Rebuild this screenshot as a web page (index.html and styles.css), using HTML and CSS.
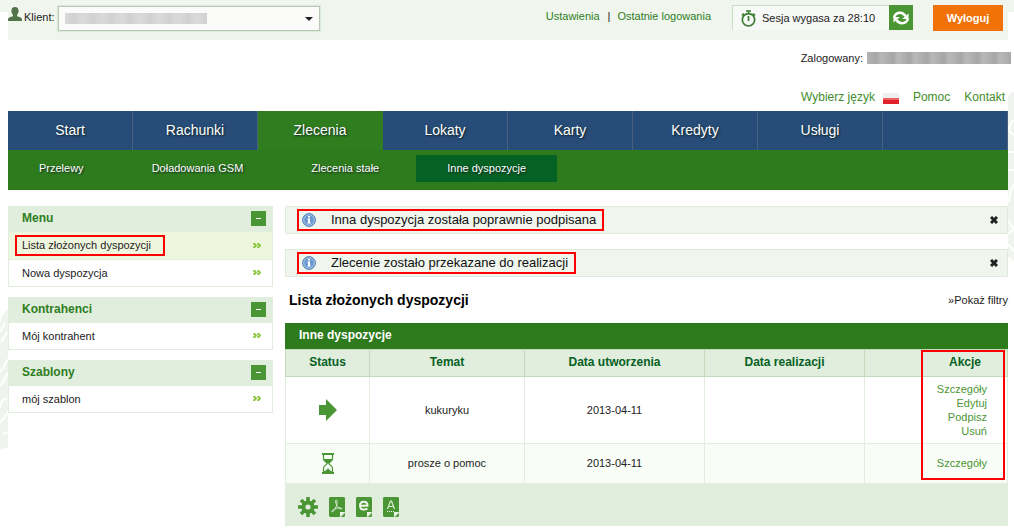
FILE: index.html
```html
<!DOCTYPE html>
<html lang="pl">
<head>
<meta charset="utf-8">
<title>Lista złożonych dyspozycji</title>
<link rel="stylesheet" href="styles.css">
</head>
<body>
<svg class="leaf leaf-left" viewBox="0 0 8 140" aria-hidden="true">
  <path d="M8 0C2 4 0 10 0 18v122l8-3z" fill="#f0f4ee"/>
  <path d="M0 22l5-9M1 32l6-10M0 62c4-4 5-9 8-13M0 75c4-2 5-8 8-12M0 98c1-8 4-10 7-9M0 112c4-2 5-7 8-10M3 124l5-2" stroke="#fff" stroke-width="2" fill="none"/>
</svg>
<svg class="leaf leaf-right" viewBox="0 0 6 176" aria-hidden="true">
  <path d="M6 0H4Q0 3 0 8v157l6 4z" fill="#f0f4ee"/>
  <path d="M6 28q-6 4-4 12l4 3M0 60h6M0 78h6M6 92q-5 8-5 18M0 128l6 10M0 142l6-5M0 152l6 7" stroke="#fff" stroke-width="2" fill="none"/>
</svg>
<div class="page">
  <header>
    <div class="topbar">
      <form class="client">
        <svg class="user" viewBox="0 0 14 14" aria-hidden="true"><path d="M7 0c2.400 0 3.600 1.500 3.600 3.800 0 1.900-.8 3.200-1.500 4v1.400c1.800.8 4.900 1.100 4.900 3.300V14H0v-1.500c0-2.200 3.100-2.500 4.900-3.300V7.800c-.7-.8-1.500-2.100-1.500-4C3.400 1.500 4.600 0 7 0z" fill="#51744a"/></svg>
        <label for="client">Klient:</label>
        <span class="select-wrap">
          <select id="client"><option></option></select>
          <span class="redacted redacted-light"></span>
          <svg class="caret" viewBox="0 0 8 4" aria-hidden="true"><path d="M0 0h8L4 4z" fill="#222"/></svg>
        </span>
      </form>
      <div class="tools">
        <a href="#">Ustawienia</a><span class="bar">|</span><a href="#">Ostatnie logowania</a>
        <div class="session">
          <svg class="watch" viewBox="0 0 15 17" aria-hidden="true"><g fill="none" stroke="#3c7c30" stroke-width="1.700"><circle cx="7.500" cy="9.800" r="6.200"/><path d="M5 1h5M7.500 1v3M7.500 6v5M12 3.500l2 2M3 3.500l-2 2"/></g></svg>
          <span>Sesja wygasa za 28:10</span>
        </div>
        <button class="refresh" type="button" aria-label="Odśwież sesję">
          <svg viewBox="0 0 18 16" aria-hidden="true"><g fill="none" stroke="#fff" stroke-width="2.600"><path d="M2 7.500C3 4 5.500 2.800 8 2.800c2.300 0 4 .9 5.500 3.200"/><path d="M16 8.500c-1 3.500-3.500 4.700-6 4.700-2.300 0-4-.9-5.500-3.200"/></g><path d="M16.500 3.500V9H10zM1.500 12.500V7H8z" fill="#fff"/></svg>
        </button>
        <button class="logout" type="button">Wyloguj</button>
      </div>
    </div>
    <div class="logged"><span>Zalogowany:</span><span class="redacted redacted-dark"></span></div>
    <div class="help">
      <a class="lang" href="#">Wybierz język <svg viewBox="0 0 16 11" aria-hidden="true"><path d="M0 0h16v6H0z" fill="#efefef"/><path d="M0 5h16v6H0z" fill="#e0202a"/><path d="M0 5h16v2H0z" fill="#f06060"/></svg></a>
      <a href="#">Pomoc</a>
      <a href="#">Kontakt</a>
    </div>
  </header>
  <nav>
    <ul class="mainnav">
      <li><a href="#">Start</a></li>
      <li><a href="#">Rachunki</a></li>
      <li class="active"><a href="#">Zlecenia</a></li>
      <li><a href="#">Lokaty</a></li>
      <li><a href="#">Karty</a></li>
      <li><a href="#">Kredyty</a></li>
      <li><a href="#">Usługi</a></li>
      <li></li>
    </ul>
    <ul class="subnav">
      <li><a href="#">Przelewy</a></li>
      <li><a href="#">Doładowania GSM</a></li>
      <li><a href="#">Zlecenia stałe</a></li>
      <li class="active"><a href="#">Inne dyspozycje</a></li>
    </ul>
  </nav>
  <div class="columns">
    <aside>
      <section class="panel">
        <h2>Menu <button type="button" aria-label="Zwiń Menu"></button></h2>
        <a class="current" href="#"><span class="marked">Lista złożonych dyspozycji</span><svg class="chev" viewBox="0 0 8 5" aria-hidden="true"><path d="M.5 0L3 2.500.5 5M4.500 0L7 2.500 4.500 5"/></svg></a>
        <a href="#">Nowa dyspozycja<svg class="chev" viewBox="0 0 8 5" aria-hidden="true"><path d="M.5 0L3 2.500.5 5M4.500 0L7 2.500 4.500 5"/></svg></a>
      </section>
      <section class="panel">
        <h2>Kontrahenci <button type="button" aria-label="Zwiń Kontrahenci"></button></h2>
        <a href="#">Mój kontrahent<svg class="chev" viewBox="0 0 8 5" aria-hidden="true"><path d="M.5 0L3 2.500.5 5M4.500 0L7 2.500 4.500 5"/></svg></a>
      </section>
      <section class="panel">
        <h2>Szablony <button type="button" aria-label="Zwiń Szablony"></button></h2>
        <a href="#">mój szablon<svg class="chev" viewBox="0 0 8 5" aria-hidden="true"><path d="M.5 0L3 2.500.5 5M4.500 0L7 2.500 4.500 5"/></svg></a>
      </section>
    </aside>
    <main>
      <div class="message">
        <div class="marked">
          <svg class="info" viewBox="0 0 14 14" aria-hidden="true"><circle cx="7" cy="7" r="6.400" fill="#6c9ad0" stroke="#547fae"/><circle cx="7" cy="7" r="5.300" fill="none" stroke="#b8d0ec" stroke-width=".8"/><path d="M6 3h2v1.600H6zM5.500 5.500H8v4h.8v1H5.300v-1H6v-3h-.5z" fill="#fff"/></svg>
          <span>Inna dyspozycja została poprawnie podpisana</span>
        </div>
        <button class="close" type="button" aria-label="Zamknij"><svg viewBox="0 0 8 8" aria-hidden="true"><path d="M1 1l6 6M7 1L1 7"/></svg></button>
      </div>
      <div class="message">
        <div class="marked">
          <svg class="info" viewBox="0 0 14 14" aria-hidden="true"><circle cx="7" cy="7" r="6.400" fill="#6c9ad0" stroke="#547fae"/><circle cx="7" cy="7" r="5.300" fill="none" stroke="#b8d0ec" stroke-width=".8"/><path d="M6 3h2v1.600H6zM5.500 5.500H8v4h.8v1H5.300v-1H6v-3h-.5z" fill="#fff"/></svg>
          <span>Zlecenie zostało przekazane do realizacji</span>
        </div>
        <button class="close" type="button" aria-label="Zamknij"><svg viewBox="0 0 8 8" aria-hidden="true"><path d="M1 1l6 6M7 1L1 7"/></svg></button>
      </div>
      <div class="heading">
        <h1>Lista złożonych dyspozycji</h1>
        <a href="#">»Pokaż filtry</a>
      </div>
      <h3>Inne dyspozycje</h3>
      <div class="table-wrap">
        <table>
          <colgroup><col class="c-status"><col class="c-topic"><col class="c-created"><col class="c-done"><col></colgroup>
          <thead>
            <tr><th>Status</th><th>Temat</th><th>Data utworzenia</th><th>Data realizacji</th><th class="actions">Akcje</th></tr>
          </thead>
          <tbody>
            <tr>
              <td><svg class="arrow" viewBox="0 0 18 22" role="img" aria-label="Przekazana"><path d="M0 6h7V0l11 11L7 22v-6H0z" fill="#4b9634"/></svg></td>
              <td>kukuryku</td><td>2013-04-11</td><td></td>
              <td class="actions"><a href="#">Szczegóły</a><a href="#">Edytuj</a><a href="#">Podpisz</a><a href="#">Usuń</a></td>
            </tr>
            <tr>
              <td><svg class="glass" viewBox="0 0 12 21" role="img" aria-label="Oczekująca"><path d="M0 0h12v2H0zM0 19h12v2H0z" fill="#4b9634"/><path d="M1.500 2v4C1.500 8.500 5 9 5 10.500S1.500 12.500 1.500 15v4M10.500 2v4c0 2.500-3.500 3-3.500 4.500s3.500 2 3.500 4.500v4" fill="none" stroke="#4b9634" stroke-width="1.200"/><path d="M2 6h8c0 2-3 2.500-3 4.500H5C5 8.500 2 8 2 6zM2 19c0-1.500 3-1.500 4-4 1 2.500 4 2.500 4 4z" fill="#4b9634"/></svg></td>
              <td>prosze o pomoc</td><td>2013-04-11</td><td></td>
              <td class="actions"><a href="#">Szczegóły</a></td>
            </tr>
          </tbody>
        </table>
        <span class="mark-actions"></span>
      </div>
      <div class="exports">
        <button type="button" class="gear" aria-label="Ustawienia tabeli"><svg viewBox="0 0 20 20" aria-hidden="true"><g stroke="#4b9634" stroke-width="3.600"><path d="M10 0v20M0 10h20M3 3l14 14M17 3L3 17"/></g><circle cx="10" cy="10" r="6.600" fill="#4b9634"/><circle cx="10" cy="10" r="2.600" fill="#e1eddd"/></svg></button>
        <button type="button" aria-label="Eksport PDF"><svg viewBox="0 0 16 20" aria-hidden="true"><path d="M1 0h14l1 1v14l-5 5H1l-1-1V1z" fill="#4b9634"/><path d="M11 20v-5h5z" fill="#eef6eb"/><path d="M12 20l4-4v3l-1 1z" fill="#4b9634"/><path d="M7 3c2 0 1 3 .7 5C7 10.500 5 14.500 3 15c-1-1 2-3 5-3.800 2-.6 5-.6 5 .5-1 1-5-1-5.800-4.700C6.800 5.500 6 4 7 3z" fill="none" stroke="#d7ead1"/></svg></button>
        <button type="button" aria-label="Eksport Elixir"><svg viewBox="0 0 16 20" aria-hidden="true"><path d="M1 0h14l1 1v14l-5 5H1l-1-1V1z" fill="#4b9634"/><path d="M11 20v-5h5z" fill="#eef6eb"/><path d="M12 20l4-4v3l-1 1z" fill="#4b9634"/><path d="M4 8.700h7.500C11.500 6 10 4.800 7.800 4.800S4 6.300 4 8.700s1.500 3.900 4 3.900c1.400 0 2.500-.4 3.300-1.300" fill="none" stroke="#eef6eb" stroke-width="2"/></svg></button>
        <button type="button" aria-label="Eksport tekstu"><svg viewBox="0 0 16 20" aria-hidden="true"><path d="M1 0h14l1 1v14l-5 5H1l-1-1V1z" fill="#4b9634"/><path d="M11 20v-5h5z" fill="#eef6eb"/><path d="M12 20l4-4v3l-1 1z" fill="#4b9634"/><path d="M4.500 12L7.500 4h1l3 8M5.500 9.500h5" fill="none" stroke="#d7ead1" stroke-width="1.200"/><path d="M4 14.500h8" stroke="#fff" stroke-dasharray="1 1"/></svg></button>
      </div>
    </main>
  </div>
</div>
</body>
</html>
```
FILE: styles.css
```css
* { box-sizing: border-box; }
body {
  margin: 0;
  position: relative;
  background: linear-gradient(#f0f5ee, #f0f5ee) top / 100% 12px no-repeat #fff;
  font: 11px/14px "Liberation Sans", Arial, sans-serif;
  color: #222;
}
a { color: inherit; text-decoration: none; }
ul { list-style: none; margin: 0; padding: 0; }
svg { display: block; flex: none; }
button { border: 0; padding: 0; margin: 0; font: inherit; cursor: pointer; background: none; }
h1, h2, h3 { margin: 0; }

.leaf { position: absolute; }
.leaf-left { left: 0; top: 310px; width: 8px; height: 140px; }
.leaf-right { right: 0; top: 92px; width: 6px; height: 176px; }

.page { position: relative; padding: 0 6px 4px 8px; }

/* Header */
.topbar {
  display: flex;
  justify-content: space-between;
  align-items: flex-start;
  height: 40px;
  padding-right: 5px;
  background: #f0f5ee;
}
.client { display: flex; padding-top: 6px; }
.user { width: 14px; height: 14px; margin-top: 1px; }
.client label { padding: 4px 3px 0 2px; }
.select-wrap { position: relative; display: block; }
.select-wrap select {
  appearance: none;
  display: block;
  width: 262px;
  height: 25px;
  border: 1px solid #b9c6b5;
  box-shadow: 0 0 1px 1px #dcebd8;
  background: #fbfcfa;
}
.redacted { display: block; }
.redacted-light {
  position: absolute;
  left: 7px;
  top: 7px;
  width: 142px;
  height: 11px;
  pointer-events: none;
  background: repeating-linear-gradient(90deg, #dadada 0, #d0d0d0 9px, #d6d6d6 13px, #dadada 19px);
}
.redacted-dark {
  width: 144px;
  height: 12px;
  margin-right: -3px;
  background: repeating-linear-gradient(90deg, #b4b4b4 0, #a6a6a6 9px, #b8b8b8 14px, #b4b4b4 17px);
}
.caret { position: absolute; right: 7px; top: 11px; width: 8px; height: 4px; pointer-events: none; }
.tools { display: flex; padding-top: 5px; }
.tools > a, .bar { padding-top: 4px; color: #2e7d1e; }
.bar { padding-left: 8px; padding-right: 7px; color: #222; }
.session {
  display: flex;
  align-items: center;
  gap: 6px;
  width: 157px;
  height: 25px;
  margin-left: 21px;
  padding-left: 8px;
  border-top: 1px solid #c9dfc5;
  border-left: 1px solid #c9dfc5;
  background: #f7f9f6;
}
.watch { width: 15px; height: 17px; }
.refresh { width: 24px; height: 25px; padding: 0 3px; background: #4b9634; }
.refresh svg { width: 18px; height: 16px; }
.logout {
  width: 70px;
  height: 26px;
  margin-left: 20px;
  background: #f07209;
  color: #fff;
  font-weight: bold;
}
.logged { display: flex; justify-content: flex-end; align-items: center; gap: 4px; padding-top: 11px; }
.help {
  display: flex;
  justify-content: flex-end;
  gap: 14px;
  padding: 25px 3px 7px 0;
  font-size: 12px;
  color: #3f8e2b;
}
.lang { display: flex; align-items: center; gap: 8px; }
.lang svg { width: 16px; height: 11px; margin-top: 2px; }

/* Navigation */
.mainnav {
  display: grid;
  grid-template-columns: repeat(8, 1fr);
  height: 39px;
  background: #264c77;
  color: #fff;
  font-size: 14px;
  line-height: 39px;
  text-align: center;
}
.mainnav li { border-right: 1px solid #48627f; }
.mainnav .active { background: #2f7d1e; border-color: #2f7d1e; }
nav a { display: block; text-shadow: 1px 1px 2px #122; }
.subnav { display: flex; gap: 6px; height: 40px; padding-top: 5px; background: #2e7b1d; color: #fff; }
.subnav a { padding: 0 31px; line-height: 27px; }
.subnav .active { height: 27px; background: #066124; }

/* Sidebar */
.columns { display: grid; grid-template-columns: 265px 1fr; gap: 12px; padding-top: 16px; align-items: start; }
aside { display: grid; gap: 10px; }
.panel { border: 1px solid #e1eddd; border-top: 0; }
.panel h2 {
  display: flex;
  justify-content: space-between;
  height: 26px;
  padding: 5px 6px 0 13px;
  background: #e1eddd;
  color: #2e7d1e;
  font-size: 12px;
  line-height: 14px;
}
.panel h2 button { width: 15px; height: 15px; padding: 0 5px; background: #4b9634; }
.panel h2 button::before { content: ""; display: block; height: 1px; background: #fff; }
.panel > a {
  display: flex;
  justify-content: space-between;
  align-items: center;
  height: 27px;
  padding: 0 11px 1px 13px;
  border-top: 1px solid #e1eddd;
}
.panel h2 + a { height: 26px; border-top: 0; }
.panel .current { height: 27px; background: #eff6de; }
.chev { width: 8px; height: 5px; }
.chev path { fill: none; stroke: #8cc63f; stroke-width: 2; }

.marked { position: relative; }
.marked::after { content: ""; position: absolute; inset: -3px -14px -4px -7px; border: 2px solid #f00; }

/* Messages */
.message {
  display: flex;
  justify-content: space-between;
  align-items: center;
  height: 28px;
  margin-bottom: 15px;
  padding: 0 9px 0 16px;
  border: 1px solid #dfe9dc;
  background: #f0f5ee;
  color: #111;
  font-size: 13px;
}
.message .marked { display: flex; align-items: center; gap: 15px; }
.message .marked::after { inset: -4px -8px -4px -5px; }
.info { width: 14px; height: 14px; }
.close { width: 8px; height: 8px; }
.close path { stroke: #222; stroke-width: 3; }

.heading { display: flex; justify-content: space-between; height: 31px; padding: 1px 0 0 4px; }
h1 { font-size: 14px; color: #000; }
h3 { height: 26px; padding-left: 14px; background: #2e7b1d; color: #fff; font-size: 12px; line-height: 24px; }

/* Table */
.table-wrap { position: relative; }
table { width: 100%; table-layout: fixed; border-collapse: collapse; }
.c-status { width: 84px; }
.c-topic { width: 155px; }
.c-created { width: 180px; }
.c-done { width: 160px; }
th { height: 27px; padding: 0 0 2px; border: 1px solid #c3d9bc; background: #e1eddd; color: #066124; font-size: 12px; }
td { height: 67px; padding: 0 0 1px; border: 1px solid #e1eddd; text-align: center; }
tbody tr + tr td { height: 40px; background: #f8fdf7; }
td svg { margin: 0 auto; }
.arrow { width: 18px; height: 22px; }
.glass { width: 12px; height: 21px; }
th.actions { text-align: right; padding-right: 26px; }
td.actions { text-align: right; padding-right: 20px; color: #4b9634; }
td.actions a { display: block; }
.mark-actions { position: absolute; right: 3px; top: 1px; bottom: 4px; width: 84px; border: 2px solid #f00; pointer-events: none; }
.exports { display: flex; align-items: center; gap: 11px; height: 42px; padding: 4px 13px 0; background: #e1eddd; }
.exports svg { width: 16px; height: 20px; }
.exports .gear svg { width: 20px; }
```
